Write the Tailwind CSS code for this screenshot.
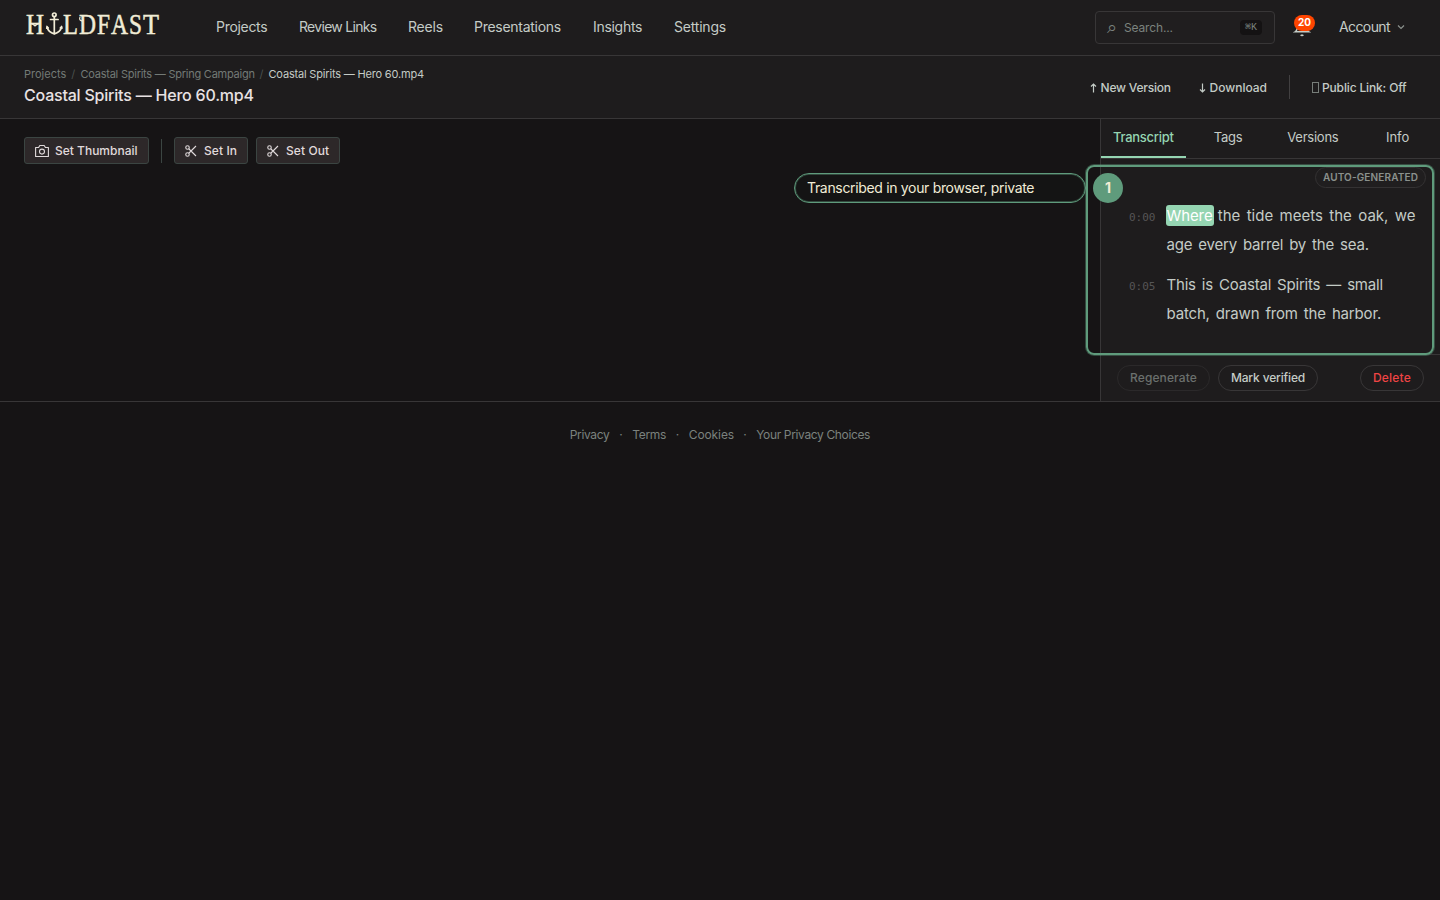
<!doctype html>
<html lang="en">

<head>
  <meta charset="utf-8">
  <title>Coastal Spirits — Hero 60.mp4</title>
  <meta name="viewport" content="width=device-width, initial-scale=1">
  <script src="https://cdn.jsdelivr.net/npm/@tailwindcss/browser@4"></script>
</head>

<body class="bg-[#161415] min-h-screen font-['Inter','Liberation_Sans',sans-serif] text-[#c4cbc6] whitespace-nowrap overflow-hidden">
  <header class="h-14 border-b border-[#383637] bg-[#1e1c1d] flex items-center pl-6 pr-[34px]">
    <svg class="w-[136px] h-10 -mt-2" viewBox="24 4 136 40" aria-label="Holdfast">
      <g fill="#f1ecd6" stroke="#f1ecd6" stroke-width=".5" font-family="Liberation Serif, serif" font-size="30">
        <text x="26" y="34" textLength="18" lengthAdjust="spacingAndGlyphs">H</text>
        <text x="63" y="34" textLength="15" lengthAdjust="spacingAndGlyphs">L</text>
        <text x="79" y="34" textLength="17" lengthAdjust="spacingAndGlyphs">D</text>
        <text x="97" y="34" textLength="13" lengthAdjust="spacingAndGlyphs">F</text>
        <text x="111" y="34" textLength="17" lengthAdjust="spacingAndGlyphs">A</text>
        <text x="129" y="34" textLength="13" lengthAdjust="spacingAndGlyphs">S</text>
        <text x="143" y="34" textLength="16" lengthAdjust="spacingAndGlyphs">T</text>
      </g>
      <!-- anchor, then the small flourishes on H, D and A -->
      <g fill="none" stroke="#f1ecd6" stroke-width="1.7" stroke-linecap="round">
        <circle cx="54.3" cy="14.8" r="1.8" />
        <path d="M54.3 17V33.500M50.500 19.500h7.600M47 27c1 4 3.500 5.800 7.300 7 3.800-1.200 6.300-3 7.300-7" />
        <path d="M46.500 28.500l.5-2 1.500 1.500M62.100 28.500l-.5-2-1.500 1.500" stroke-width="1.2" />
        <path d="M32 23.500l3 2.500 3-2.500M83 20c-2.500 2-4-.5-3-3M116.500 25.500l3 2 3-2" stroke-width="1.2" />
      </g>
    </svg>
    <nav class="ml-14 -mt-px flex gap-8 text-sm">
      <a class="w-[51px] tracking-[-0.3px]" href="#">Projects</a>
      <a class="w-[77px] tracking-[-0.7px]" href="#">Review Links</a>
      <a class="w-[34px] tracking-[-0.2px]" href="#">Reels</a>
      <a class="w-[87px] tracking-[-0.28px]" href="#">Presentations</a>
      <a class="w-[49px] tracking-[-0.3px]" href="#">Insights</a>
      <a class="w-[52px] tracking-[-0.2px]" href="#">Settings</a>
    </nav>
    <div class="ml-auto flex items-center">
      <div class="w-[180px] h-[33px] rounded border border-[#383637] bg-[#201e1f] flex items-center px-3 text-xs text-[#7b827e]">
        <span class="w-4 -ml-px mr-px -mt-px text-lg leading-4">⌕</span><span class="tracking-[-0.15px]">Search...</span>
        <kbd class="ml-auto bg-[#141213] rounded-sm w-[22px] h-[15px] flex items-center justify-center font-['Liberation_Mono',monospace] text-[10px]">⌘K</kbd>
      </div>
      <div class="relative ml-[18px] w-[18px] h-[18px]">
        <svg class="w-[18px] h-[18px]" viewBox="0 0 24 24" fill="none" stroke="#c4cbc6" stroke-width="2">
          <path d="M18 8A6 6 0 0 0 6 8c0 7-3 9-3 9h18s-3-2-3-9M13.700 21a2 2 0 0 1-3.400 0" />
        </svg>
        <span class="absolute left-[1px] -top-1 w-[21px] h-4 rounded-full bg-[#ff4500] text-white text-[10px] font-bold flex items-center justify-center">20</span>
      </div>
      <button class="ml-[28px] -mt-px w-[67px] flex items-center justify-between text-sm tracking-[-0.6px]">Account
        <svg class="w-[10px] h-[10px] shrink-0" viewBox="0 0 10 10" fill="none" stroke="#8b918d" stroke-width="1.2"><path d="M2 3.500l3 3 3-3" /></svg>
      </button>
    </div>
  </header>

  <section class="h-[63px] border-b border-[#383637] bg-[#1e1c1d] flex items-center justify-between pl-6 pr-[34px]">
    <div class="-mt-px">
      <div class="flex text-[11px] leading-4 text-[#737a76]">
        <span class="w-[42px]">Projects</span>
        <span class="w-[14.5px] text-center text-[#4b504d]">/</span>
        <span class="w-[174px] tracking-[-0.24px]">Coastal Spirits — Spring Campaign</span>
        <span class="w-[14px] text-center text-[#4b504d]">/</span>
        <span class="text-[#c4cbc6] tracking-[-0.18px]">Coastal Spirits — Hero 60.mp4</span>
      </div>
      <h1 class="text-base leading-[26px] font-medium text-[#e8e2e3] tracking-[-0.21px]">Coastal Spirits — Hero 60.mp4</h1>
    </div>
    <div class="pt-px flex items-center text-xs font-medium">
      <button class="w-[109px] flex items-center tracking-[-0.2px]">
        <svg class="w-[7px] h-[10px] mr-[3.5px]" viewBox="0 0 7 10" fill="none" stroke="currentColor" stroke-width="1.2"><path d="M3.500 9.500V1M1 3.500L3.500 1 6 3.500" /></svg>New Version
      </button>
      <button class="w-[90px] flex items-center">
        <svg class="w-[7px] h-[10px] mr-[3.5px]" viewBox="0 0 7 10" fill="none" stroke="currentColor" stroke-width="1.2"><path d="M3.500 .5V9M1 6.500L3.500 9 6 6.500" /></svg>Download
      </button>
      <span class="-mt-px w-px h-6 bg-[#424041]"></span>
      <button class="ml-[22px] w-[94px] flex items-center tracking-[-0.15px]"><span class="shrink-0 w-[7px] h-[11px] mr-[3px] border border-[#777d79]"></span>Public Link: Off</button>
    </div>
  </section>

  <main class="flex h-[283px] border-b border-[#383637]">
    <div class="flex-1 pt-[18px] pl-6">
      <div class="flex items-center text-xs font-medium text-[#e0dadb]">
        <button class="w-[125px] h-[27px] rounded-[3px] border border-[#3b4542] bg-[#2d2829] flex items-center pl-[10px]">
          <svg class="w-[14px] h-[14px] mr-[6px]" viewBox="0 0 14 14" fill="none" stroke="currentColor" stroke-width="1.1"><path d="M.6 3.500h3l1.200-2h4.400l1.200 2h3v9H.6z" stroke-linejoin="round" /><circle cx="7" cy="7.6" r="2.5" /></svg>
          Set Thumbnail
        </button>
        <span class="mx-3 w-px h-6 bg-[#3b4542]"></span>
        <button class="w-[74px] h-[27px] rounded-[3px] border border-[#3b4542] bg-[#2d2829] flex items-center pl-[10px]">
          <svg class="w-3 h-3 mr-[7px]" viewBox="0 0 24 24" fill="none" stroke="currentColor" stroke-width="2.2"><circle cx="5" cy="5" r="3.5" /><circle cx="5" cy="19" r="3.5" /><path d="M22 2L7.500 16.500M7.500 7.500L22 22" /></svg>
          <span class="tracking-[0.1px]">Set In</span>
        </button>
        <button class="ml-2 w-[84px] h-[27px] rounded-[3px] border border-[#3b4542] bg-[#2d2829] flex items-center pl-[10px]">
          <svg class="w-3 h-3 mr-[7px]" viewBox="0 0 24 24" fill="none" stroke="currentColor" stroke-width="2.2"><circle cx="5" cy="5" r="3.5" /><circle cx="5" cy="19" r="3.5" /><path d="M22 2L7.500 16.500M7.500 7.500L22 22" /></svg>
          <span class="tracking-[0.1px]">Set Out</span>
        </button>
      </div>
    </div>

    <aside class="relative w-[340px] border-l border-[#383637] bg-[#1e1c1d] flex flex-col">
      <div class="h-10 border-b border-[#383637] grid grid-cols-4 text-[13px] text-center leading-[37px]">
        <button class="border-b-2 border-[#95d5b2] text-[#95d5b2] font-medium tracking-[-0.25px]">Transcript</button>
        <button class="pb-[2px] tracking-[-0.2px]">Tags</button>
        <button class="pb-[2px] tracking-[-0.25px]">Versions</button>
        <button class="pb-[2px]">Info</button>
      </div>
      <div class="flex-1 pt-2 pr-[14px]">
        <span class="ml-auto w-[111px] h-[21px] rounded-full border border-[#343233] bg-[#201e1f] text-[#8b918d] text-[10px] font-semibold tracking-[0.15px] flex items-center justify-center">AUTO-GENERATED</span>
        <div class="mt-[13px] ml-7 flex text-[15px] leading-[29px]">
          <span class="w-[37.5px] pt-[2px] text-[11px] text-[#565556] font-['DejaVu_Sans_Mono',monospace]">0:00</span>
          <p>
            <span class="bg-[#95d5b2] text-white rounded-[3px] -mx-px px-px py-px tracking-[-0.1px]">Where</span>
            <span class="ml-px [word-spacing:2.2px]">the tide meets the oak, we</span><br>
            <span class="[word-spacing:2px] tracking-[-0.2px]">age every barrel by the sea.</span>
          </p>
        </div>
        <div class="mt-[11px] ml-7 flex text-[15px] leading-[29px]">
          <span class="w-[37.5px] pt-[2px] text-[11px] text-[#565556] font-['DejaVu_Sans_Mono',monospace]">0:05</span>
          <p>
            <span class="[word-spacing:2px] tracking-[-0.2px]">This is Coastal Spirits — small</span><br>
            <span class="[word-spacing:2px] tracking-[-0.17px]">batch, drawn from the harbor.</span>
          </p>
        </div>
      </div>
      <div class="h-[47px] border-t border-[#383637] flex items-center px-4 gap-2 text-xs font-medium">
        <button class="w-[93px] h-[26px] rounded-full border border-[#2b292a] text-[#6b706d] tracking-[0.1px]">Regenerate</button>
        <button class="w-[100px] h-[26px] rounded-full border border-[#383637] tracking-[-0.15px]">Mark verified</button>
        <button class="ml-auto w-16 h-[26px] rounded-full border border-[#383637] text-[#ef4444] tracking-[0.2px]">Delete</button>
      </div>

      <!-- callout over the transcript -->
      <div class="absolute -left-[15px] top-[46px] w-[348px] h-[190px] rounded-lg border-2 border-[#5f9b7c] shadow-[0_0_0_1px_#5f9b7c66]"></div>
      <div class="absolute -left-[307px] top-[54px] w-[292px] h-[30px] rounded-full border border-[#5f9b7c] shadow-[inset_0_0_0_1px_#5f9b7c66] bg-[#141414] text-[#f1ecd6] text-sm tracking-[-0.33px] flex items-center pl-3">Transcribed in your browser, private</div>
      <div class="absolute -left-2 top-[54px] w-[30px] h-[30px] rounded-full bg-[#5f9b7c] text-[#f1ecd6] text-sm font-bold flex items-center justify-center">1</div>
    </aside>
  </main>

  <footer class="pt-6 flex justify-center text-xs leading-[18px] text-[#7b827e]">
    <a class="w-[40px] tracking-[-0.35px]" href="#">Privacy</a><span class="w-[22.5px] text-center">·</span>
    <a class="w-[34px] tracking-[-0.3px]" href="#">Terms</a><span class="w-[22.5px] text-center">·</span>
    <a class="w-[45px] tracking-[-0.1px]" href="#">Cookies</a><span class="w-[22.5px] text-center">·</span>
    <a class="w-[114px] tracking-[-0.36px]" href="#">Your Privacy Choices</a>
  </footer>
</body>

</html>
